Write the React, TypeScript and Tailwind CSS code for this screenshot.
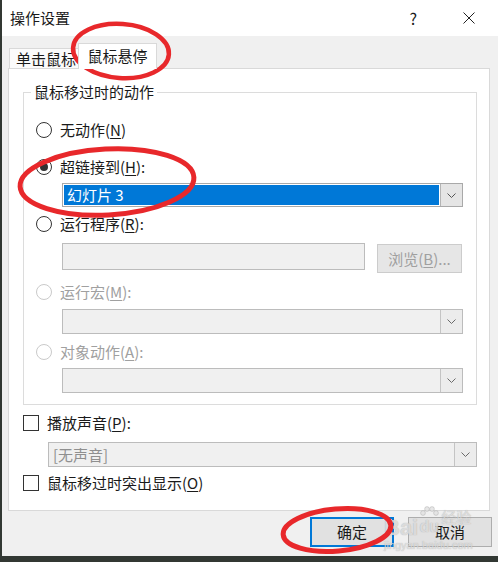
import React from "react";

const FONT = { fontFamily: '"Noto Sans CJK SC", "Noto Sans", sans-serif' };
const LATIN = { fontFamily: '"Liberation Sans", sans-serif' };

function Chevron({ color = "#555" }: { color?: string }) {
  return (
    <svg width="9" height="5" viewBox="0 0 9 5">
      <path d="M0.5 0.5 L4.5 4.5 L8.5 0.5" fill="none" stroke={color} strokeWidth="1" />
    </svg>
  );
}

function Radio({ checked = false, disabled = false }: { checked?: boolean; disabled?: boolean }) {
  return (
    <span
      className={
        "w-[16px] h-[16px] rounded-full border bg-white flex items-center justify-center shrink-0 " +
        (disabled ? "border-[#cacaca]" : "border-[#333333]")
      }
    >
      {checked && <span className="w-[8px] h-[8px] rounded-full bg-[#333333]" />}
    </span>
  );
}

function DisabledSelect({ text = "", className = "" }: { text?: string; className?: string }) {
  return (
    <div className={"h-[25px] flex border border-[#bcbcbc] bg-[#f0f0f0] " + className}>
      <div className="flex-1 flex items-center pl-[4px] text-[#8f8f8f]">{text}</div>
      <div className="w-[22px] border-l border-[#c4c4c4] bg-[#ececec] flex items-center justify-center">
        <Chevron color="#6a6a6a" />
      </div>
    </div>
  );
}

export default function App() {
  return (
    <div
      className="relative w-[498px] h-[562px] overflow-hidden bg-[#323833] text-[15px] leading-[20px] text-[#1a1a1a]"
      style={FONT}
    >
      <div className="ml-[2px] h-[556px] flex flex-col bg-[#f0f0f0]">
        {/* title bar */}
        <div className="h-[36px] bg-white flex items-center pl-[8px]">
          <span className="flex-1 text-[15px]">操作设置</span>
          <span className="text-[16px]">?</span>
          <svg className="ml-[46px] mr-[23px]" width="12" height="12" viewBox="0 0 12 12">
            <path d="M0.5 0.5 L11.5 11.5 M11.5 0.5 L0.5 11.5" stroke="#222" strokeWidth="1" />
          </svg>
        </div>

        {/* tabs */}
        <div className="h-[32px] flex items-end pl-[7px]">
          <div className="h-[20px] w-[71px] border border-b-0 border-[#d9d9d9] bg-[#fbfbfb] flex items-center pl-[6px] overflow-hidden whitespace-nowrap">
            单击鼠标
          </div>
          <div className="relative z-10 -ml-[2px] -mb-[1px] h-[26px] w-[79px] border border-b-0 border-[#d9d9d9] bg-white flex items-center justify-center pb-[1px]">
            鼠标悬停
          </div>
        </div>

        {/* panel */}
        <div className="ml-[6px] w-[482px] h-[443px] border border-[#d9d9d9] bg-white flex flex-col pl-[14px] pr-[12px]">
          {/* group box */}
          <div className="relative mt-[23px] border border-[#dcdcdc] flex flex-col pl-[12px] pr-[13px] pt-[27px] pb-[11px]">
            <span className="absolute left-[7px] -top-[11px] bg-white px-[3px]">鼠标移过时的动作</span>

            <div className="h-[20px] flex items-center gap-[8px]">
              <Radio />
              <span>
                无动作(<u className="underline-offset-2">N</u>)
              </span>
            </div>

            <div className="mt-[17px] h-[20px] flex items-center gap-[8px]">
              <Radio checked />
              <span>
                超链接到(<u className="underline-offset-2">H</u>):
              </span>
            </div>

            <div className="mt-[6px] ml-[26px] h-[24px] flex border border-[#a9a9a9] bg-white">
              <div className="flex-1 m-[1px] bg-[#0078d7] text-white flex items-center pl-[3px]">幻灯片 3</div>
              <div className="w-[22px] border-l border-[#b4b4b4] bg-[#e5e5e5] flex items-center justify-center">
                <Chevron />
              </div>
            </div>

            <div className="mt-[7px] h-[20px] flex items-center gap-[8px]">
              <Radio />
              <span>
                运行程序(<u className="underline-offset-2">R</u>):
              </span>
            </div>

            <div className="mt-[9px] ml-[26px] h-[30px] flex items-start">
              <div className="w-[303px] h-[27px] border border-[#bcbcbc] bg-[#f0f0f0]" />
              <div className="ml-[12px] mt-[1px] w-[85px] h-[29px] border border-[#cccccc] bg-[#e6e6e6] flex items-center justify-center text-[#a0a0a0]">
                浏览(<u className="underline-offset-2">B</u>)...
              </div>
            </div>

            <div className="mt-[9px] h-[20px] flex items-center gap-[8px] text-[#a0a0a0]">
              <Radio disabled />
              <span>
                运行宏(<u className="underline-offset-2">M</u>):
              </span>
            </div>

            <DisabledSelect className="mt-[7px] ml-[26px]" />

            <div className="mt-[8px] h-[20px] flex items-center gap-[8px] text-[#a0a0a0]">
              <Radio disabled />
              <span>
                对象动作(<u className="underline-offset-2">A</u>):
              </span>
            </div>

            <DisabledSelect className="mt-[6px] ml-[26px]" />
          </div>

          {/* checkboxes */}
          <div className="mt-[10px] h-[16px] flex items-center gap-[8px]">
            <span className="w-[16px] h-[16px] border border-[#333333] bg-white shrink-0" />
            <span>
              播放声音(<u className="underline-offset-2">P</u>):
            </span>
          </div>

          <DisabledSelect text="[无声音]" className="mt-[11px] ml-[25px]" />

          <div className="mt-[8px] h-[16px] flex items-center gap-[8px]">
            <span className="w-[16px] h-[16px] border border-[#333333] bg-white shrink-0" />
            <span>
              鼠标移过时突出显示(<u className="underline-offset-2">O</u>)
            </span>
          </div>
        </div>

        {/* buttons */}
        <div className="mt-[6px] flex justify-end gap-[14px] pr-[6px]">
          <div className="w-[84px] h-[30px] border-2 border-[#0078d7] bg-[#e1e1e1] flex items-center justify-center">
            确定
          </div>
          <div className="w-[84px] h-[30px] border border-[#adadad] bg-[#e1e1e1] flex items-center justify-center">
            取消
          </div>
        </div>
      </div>

      {/* baidu watermark (faint, over the buttons) */}
      <div className="absolute left-[384px] top-[506px] w-[92px] h-[46px] pointer-events-none select-none text-[rgba(235,235,235,0.75)] [text-shadow:0_0_1px_rgba(120,120,120,0.6)]">
        <div className="flex items-start">
          <span className="mt-[10px] text-[22px] leading-[24px] font-bold" style={LATIN}>
            Bai
          </span>
          <div className="flex flex-col items-center ml-[1px]">
            <svg width="20" height="14" viewBox="0 0 20 14">
              <g fill="rgba(225,225,225,0.8)" stroke="rgba(140,140,140,0.5)" strokeWidth="0.6">
                <circle cx="4" cy="7" r="2.4" />
                <circle cx="8" cy="3" r="2.4" />
                <circle cx="13" cy="3" r="2.4" />
                <circle cx="17" cy="7" r="2.4" />
              </g>
            </svg>
            <span className="-mt-[1px] text-[16px] leading-[16px] font-bold" style={LATIN}>
              du
            </span>
          </div>
          <span className="ml-[2px] mt-[2px] text-[15px] leading-[18px]">经验</span>
        </div>
        <div className="-mt-[1px] text-[11px] leading-[12px]" style={LATIN}>
          jingyan.baidu.com
        </div>
      </div>

      {/* red annotation ellipses */}
      <svg className="absolute inset-0 pointer-events-none" width="498" height="562" viewBox="0 0 498 562">
        <ellipse cx="121" cy="51" rx="48" ry="27" fill="none" stroke="#e8282b" strokeWidth="4.5" transform="rotate(4 121 51)" />
        <ellipse cx="107" cy="182" rx="87" ry="33" fill="none" stroke="#e8282b" strokeWidth="5" transform="rotate(-3 107 182)" />
        <ellipse cx="337" cy="530" rx="54" ry="21" fill="none" stroke="#e8282b" strokeWidth="5" transform="rotate(-5 337 530)" />
      </svg>
    </div>
  );
}
